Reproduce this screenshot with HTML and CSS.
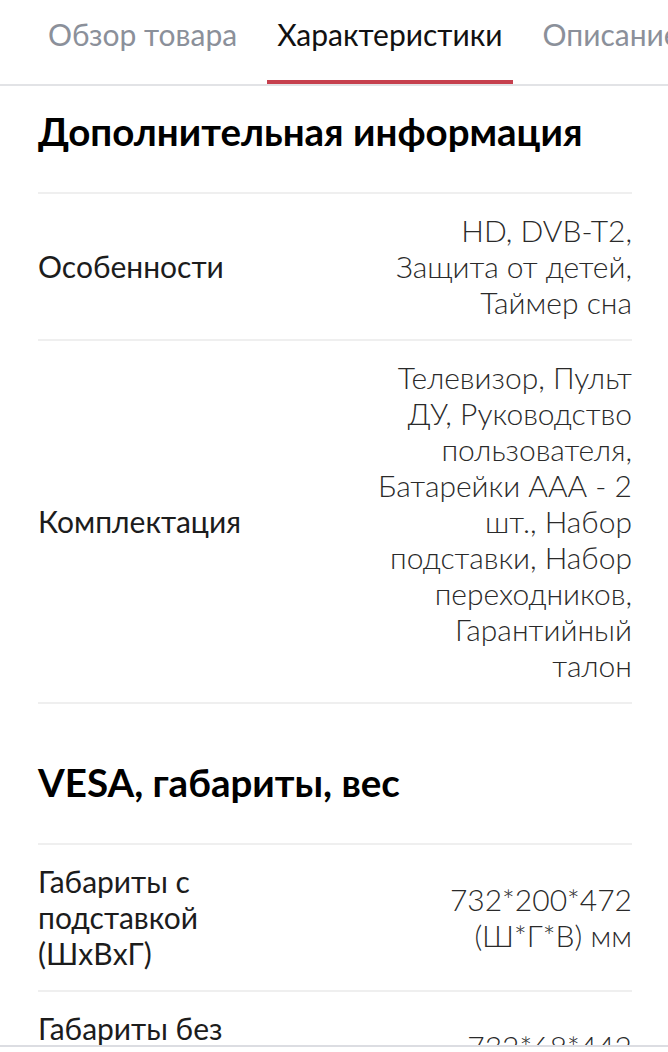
FILE: index.html
```html
<!DOCTYPE html>
<html lang="ru">
<head>
<meta charset="utf-8">
<link rel="stylesheet" href="styles.css">
</head>
<body>
<nav class="tabs">
  <div class="tab">Обзор товара</div>
  <div class="tab active">Характеристики</div>
  <div class="tab">Описание</div>
</nav>
<main class="content">
  <section class="group">
    <h2 class="group-title">Дополнительная информация</h2>
    <div class="row">
      <div class="label">Особенности</div>
      <div class="value">HD, DVB-T2, Защита от детей, Таймер сна</div>
    </div>
    <div class="row">
      <div class="label">Комплектация</div>
      <div class="value">Телевизор, Пульт ДУ, Руководство пользователя, Батарейки ААА - 2 шт., Набор подставки, Набор переходников, Гарантийный талон</div>
    </div>
  </section>
  <section class="group">
    <h2 class="group-title">VESA, габариты, вес</h2>
    <div class="row">
      <div class="label">Габариты с подставкой (ШxВxГ)</div>
      <div class="value">732*200*472 (Ш*Г*В) мм</div>
    </div>
    <div class="row">
      <div class="label">Габариты без подставки (ШxВxГ)</div>
      <div class="value">732*68*442 (Ш*Г*В) мм</div>
    </div>
  </section>
</main>
<div class="bottom-bar"></div>
</body>
</html>
```
FILE: styles.css
```css
html, body {
  margin: 0;
  padding: 0;
  background: #fff;
  overflow: hidden;
}
body {
  font-family: Lato, "Noto Sans", sans-serif;
  color: #1a1a1a;
  width: 668px;
  height: 1052px;
}
.tabs {
  display: flex;
  gap: 20px;
  padding-left: 38px;
  border-bottom: 2px solid #e2e3e6;
  white-space: nowrap;
  overflow: hidden;
  box-sizing: border-box;
  height: 86px;
}
.tab {
  padding: 16px 10px 0;
  font-size: 30px;
  font-weight: 400;
  color: #8b909a;
  position: relative;
  flex-shrink: 0;
}
.tab.active {
  color: #111;
}
.tab.active::after {
  content: "";
  position: absolute;
  left: 0;
  right: 0;
  bottom: 0;
  height: 4px;
  background: #c6404e;
}
.content {
  padding: 0 36px 0 38px;
}
.group-title {
  margin: 0;
  font-size: 38.5px;
  font-weight: 700;
  color: #000;
  line-height: 40px;
  padding: 25px 0 41px;
}
.group + .group .group-title {
  padding-top: 58px;
}
.row {
  display: flex;
  align-items: center;
  justify-content: space-between;
  border-top: 2px solid #efefef;
  padding: 18px 0 19px;
  font-size: 30px;
  line-height: 36px;
}
.row:last-child {
  border-bottom: 2px solid #efefef;
}
.group:last-child .row:last-child {
  border-bottom: none;
}
.label {
  flex: 0 0 225px;
  font-weight: 400;
  color: #1c1c1c;
}
.value {
  flex: 0 0 264px;
  text-align: right;
  font-weight: 300;
  color: #2a2a2a;
}
.bottom-bar {
  position: fixed;
  left: 0;
  right: 0;
  bottom: 0;
  height: 5px;
  background: #fff;
  border-top: 2px solid #dcdde2;
}
```
